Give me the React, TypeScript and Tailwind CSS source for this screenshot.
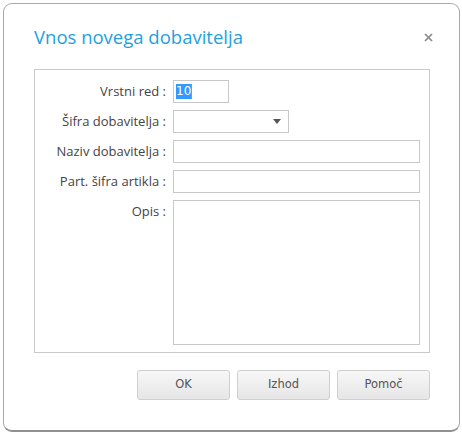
export default function App() {
  const label = "text-right text-[13px] leading-[23px] text-[#444]";
  const input = "h-[23px] border border-[#c8c8c8] bg-white";
  const btn =
    "w-[93px] h-[30px] rounded-[3px] border border-[#cfcfcf] bg-gradient-to-b from-[#f7f7f7] to-[#e6e6e6] text-[11.5px] text-[#555] font-['DejaVu_Sans',sans-serif]";
  return (
    <div className="w-[462px] h-[436px] bg-white pl-[3px] pr-[2px] pt-[3px] font-['Open_Sans',sans-serif]">
      <div className="h-[429px] rounded-[9px] border border-[#a8a8a8] border-b-[2px] border-b-[#909090] bg-white pl-[30px] pr-[29px] pt-[21px]">
        <div className="flex items-center justify-between h-[24px]">
          <h1 className="text-[18.5px] leading-[24px] text-[#1e9fe0] font-normal">Vnos novega dobavitelja</h1>
          <svg width="9" height="9" viewBox="0 0 9 9" className="mr-[-3px]">
            <path d="M1 1 L8 8 M8 1 L1 8" stroke="#8a8a8a" strokeWidth="1.7" />
          </svg>
        </div>
        <div className="mt-[20px] border border-[#cacaca] pt-[10px] pr-[9px] pb-[7px] grid grid-cols-[131px_1fr] gap-x-[7px] gap-y-[7px]">
          <div className={label}>Vrstni red :</div>
          <div className={`${input} w-[56px] flex items-center pl-[2px]`}>
            <span className="bg-[#3399ff] text-white text-[12px] leading-[15px] font-['DejaVu_Sans',sans-serif]">10</span>
            <span className="w-[1px] h-[15px] bg-[#e08030]" />
          </div>
          <div className={label}>Šifra dobavitelja :</div>
          <div className={`${input} w-[116px] flex items-center justify-end pr-[7px]`}>
            <svg width="8" height="5" viewBox="0 0 8 5">
              <path d="M0 0 H8 L4 5 Z" fill="#555" />
            </svg>
          </div>
          <div className={label}>Naziv dobavitelja :</div>
          <div className={input} />
          <div className={label}>Part. šifra artikla :</div>
          <div className={input} />
          <div className={label}>Opis :</div>
          <div className="h-[145px] border border-[#c8c8c8] bg-white" />
        </div>
        <div className="mt-[17px] flex justify-end gap-[7px]">
          <button className={btn}>OK</button>
          <button className={btn}>Izhod</button>
          <button className={btn}>Pomoč</button>
        </div>
      </div>
    </div>
  );
}
